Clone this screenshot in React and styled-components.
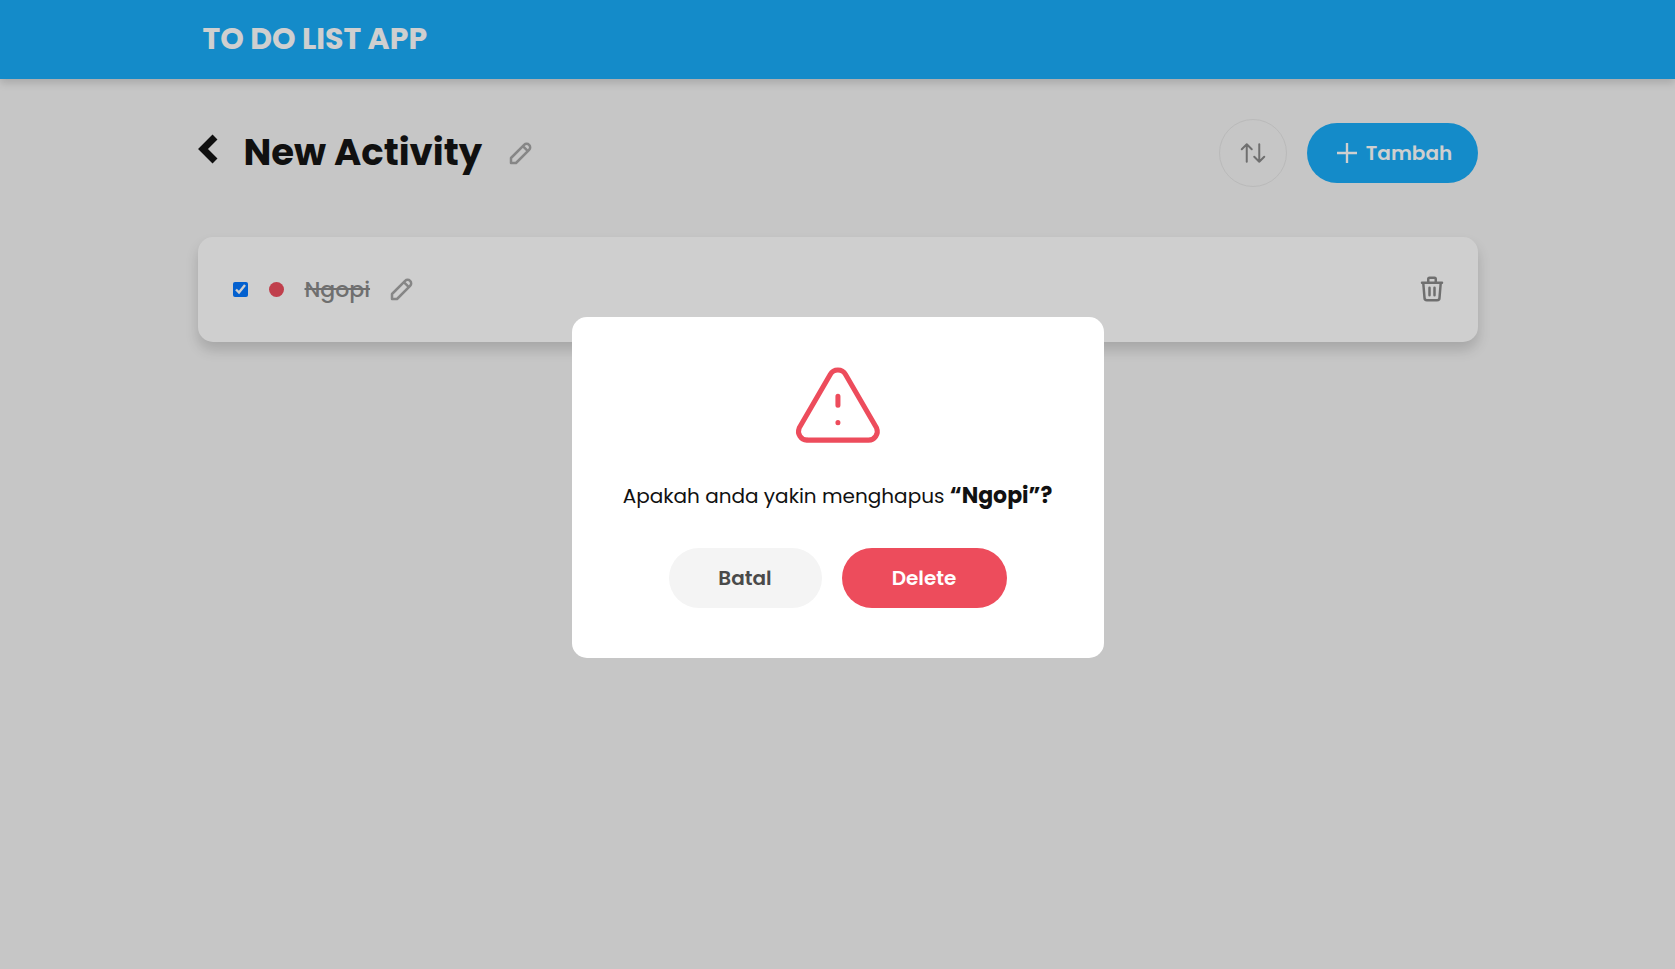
import React, { useState } from 'react';
import styled, { createGlobalStyle, css } from 'styled-components';

const GlobalStyle = createGlobalStyle`
  * {
    box-sizing: border-box;
  }

  body {
    margin: 0;
    background: #f4f4f4;
    color: #111111;
    font-family: Poppins, Inter, sans-serif;
  }

  button {
    font-family: inherit;
    cursor: pointer;
  }
`;

const Page = styled.div`
  min-height: 100vh;
`;

const Header = styled.header`
  background: #16abf8;
  box-shadow: 0 4px 8px rgba(0, 0, 0, 0.15);
`;

const Container = styled.div`
  max-width: 1280px;
  margin: 0 auto;
`;

const Brand = styled.h2`
  margin: 0;
  padding: 0 5px 2px;
  color: #ffffff;
  font-size: 30px;
  font-weight: 700;
  line-height: 77px;
`;

const Toolbar = styled.div`
  display: flex;
  align-items: center;
  justify-content: space-between;
  padding: 40px 0 50px;
`;

const Group = styled.div`
  display: flex;
  align-items: center;
  gap: ${props => props.$gap || 20}px;
`;

const Title = styled.h1`
  margin: 0;
  padding-bottom: 2px;
  font-size: 37px;
  font-weight: 700;
  line-height: 54px;
`;

const IconButton = styled.button`
  display: flex;
  padding: 0;
  border: 0;
  background: none;
  color: ${props => props.$color || '#a4a4a4'};
`;

const SortButton = styled.button`
  display: flex;
  align-items: center;
  justify-content: center;
  width: 68px;
  height: 68px;
  border: 1px solid #e5e5e5;
  border-radius: 50%;
  background: none;
  color: #888888;
`;

const variants = {
  primary: css`
    background: #16abf8;
    color: #ffffff;
  `,
  danger: css`
    background: #ed4c5c;
    color: #ffffff;
  `,
  light: css`
    background: #f4f4f4;
    color: #4a4a4a;
  `
};

const Button = styled.button`
  display: flex;
  align-items: center;
  justify-content: center;
  gap: 4px;
  min-width: ${props => props.$width}px;
  height: 60px;
  border: 0;
  border-radius: 30px;
  font-size: 20px;
  font-weight: 600;
  ${props => variants[props.$variant]}
`;

const TodoItem = styled.div`
  display: flex;
  align-items: center;
  justify-content: space-between;
  height: 105px;
  padding: 0 31px 1px 35px;
  border-radius: 15px;
  background: #ffffff;
  box-shadow: 0 8px 13px rgba(0, 0, 0, 0.16);
`;

const Check = styled.input`
  width: 15px;
  height: 15px;
  margin: 0;
  accent-color: #0075ff;
`;

const Priority = styled.span`
  width: 15px;
  height: 15px;
  border-radius: 50%;
  background: #ed4c5c;
`;

const TodoText = styled.label`
  font-size: 22px;
  font-weight: 500;
  color: ${props => (props.$done ? '#888888' : '#111111')};
  text-decoration: ${props => (props.$done ? 'line-through' : 'none')};
`;

const Overlay = styled.div`
  position: fixed;
  inset: 0;
  display: flex;
  align-items: center;
  justify-content: center;
  padding-top: 6px;
  background: rgba(17, 17, 17, 0.2);
`;

const Dialog = styled.div`
  display: flex;
  flex-direction: column;
  align-items: center;
  width: 532px;
  padding: 40px 0 50px;
  border-radius: 15px;
  background: #ffffff;
  color: #ed4c5c;
`;

const Message = styled.p`
  margin: 16px 0 34px;
  color: #111111;
  font-size: 20px;
  line-height: 36px;
  white-space: nowrap;

  strong {
    font-size: 22px;
  }
`;

const Icon = ({ size = 30, stroke = 2, children }) => (
  <svg width={size} height={size} viewBox="0 0 24 24" fill="none" stroke="currentColor"
       strokeWidth={stroke} strokeLinecap="round" strokeLinejoin="round" aria-hidden="true">
    {children}
  </svg>
);

const PencilIcon = () => (
  <Icon>
    <path d="M4 20h4l10.5-10.5a1.5 1.5 0 0 0-4-4L4 16v4M13.5 6.5l4 4"/>
  </Icon>
);

const TrashIcon = () => (
  <Icon>
    <path d="M4 7h16M10 11v6M14 11v6M5 7l1 12a2 2 0 0 0 2 2h8a2 2 0 0 0 2-2l1-12M9 7V4a1 1 0 0 1 1-1h4a1 1 0 0 1 1 1v3"/>
  </Icon>
);

const SortIcon = () => (
  <Icon stroke={1.6}>
    <path d="M3 9l4-4 4 4M7 5v14M21 15l-4 4-4-4M17 19V5"/>
  </Icon>
);

const PlusIcon = () => (
  <Icon stroke={1.9}>
    <path d="M12 4v16M4 12h16" strokeLinecap="butt"/>
  </Icon>
);

const WarningIcon = () => (
  <Icon size={105} stroke={1.15}>
    <path d="M12.1 9v2M12.1 15v.01M5.1 19h14a2 2 0 0 0 1.84-2.75L13.84 4a2 2 0 0 0-3.5 0l-7.1 12.25A2 2 0 0 0 4.99 19"/>
  </Icon>
);

const BackIcon = () => (
  <svg width="22" height="38" viewBox="0 0 22 38" fill="none" stroke="currentColor" strokeWidth="7" aria-hidden="true">
    <path d="M17 3L5 15l12 12"/>
  </svg>
);

const DeleteDialog = ({ name, onCancel, onDelete }) => (
  <Overlay>
    <Dialog role="dialog" aria-modal="true">
      <WarningIcon/>
      <Message>Apakah anda yakin menghapus <strong>“{name}”?</strong></Message>
      <Group>
        <Button $variant="light" $width={153} onClick={onCancel}>Batal</Button>
        <Button $variant="danger" $width={165} onClick={onDelete}>Delete</Button>
      </Group>
    </Dialog>
  </Overlay>
);

const App = () => {
  const [todos, setTodos] = useState([{ id: 1, text: 'Ngopi', done: true }]);
  const [target, setTarget] = useState(todos[0]);

  const onToggle = id =>
    setTodos(todos.map(todo => (todo.id === id ? { ...todo, done: !todo.done } : todo)));

  const onDelete = () => {
    setTodos(todos.filter(todo => todo.id !== target.id));
    setTarget(null);
  };

  return (
    <Page>
      <GlobalStyle/>
      <Header>
        <Container>
          <Brand>TO DO LIST APP</Brand>
        </Container>
      </Header>
      <Container>
        <Toolbar>
          <Group $gap={24}>
            <IconButton $color="#111111" aria-label="Kembali"><BackIcon/></IconButton>
            <Title>New Activity</Title>
            <IconButton aria-label="Ubah judul"><PencilIcon/></IconButton>
          </Group>
          <Group>
            <SortButton aria-label="Urutkan"><SortIcon/></SortButton>
            <Button $variant="primary" $width={171}><PlusIcon/>Tambah</Button>
          </Group>
        </Toolbar>
        {todos.map(todo => (
          <TodoItem key={todo.id}>
            <Group $gap={21}>
              <Check type="checkbox" id={`todo-${todo.id}`} checked={todo.done}
                     onChange={() => onToggle(todo.id)}/>
              <Priority/>
              <Group $gap={17}>
                <TodoText htmlFor={`todo-${todo.id}`} $done={todo.done}>{todo.text}</TodoText>
                <IconButton aria-label="Ubah"><PencilIcon/></IconButton>
              </Group>
            </Group>
            <IconButton $color="#888888" aria-label="Hapus" onClick={() => setTarget(todo)}>
              <TrashIcon/>
            </IconButton>
          </TodoItem>
        ))}
      </Container>
      {target && <DeleteDialog name={target.text} onCancel={() => setTarget(null)} onDelete={onDelete}/>}
    </Page>
  );
};

export default App;
